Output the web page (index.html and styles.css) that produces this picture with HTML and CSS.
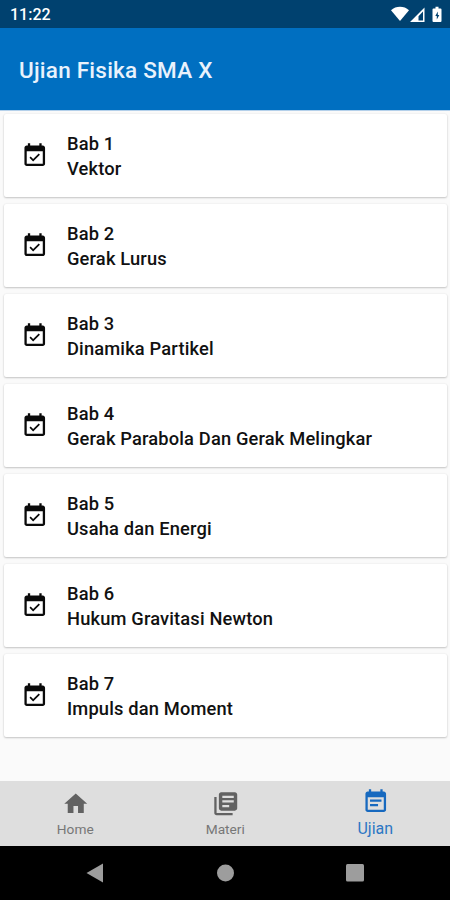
FILE: index.html
```html
<!DOCTYPE html>
<html lang="id">
<head>
<meta charset="utf-8">
<title>Ujian Fisika SMA X</title>
<link rel="stylesheet" href="styles.css">
</head>
<body>
<svg width="0" height="0" class="defs">
  <symbol id="event" viewBox="0 0 24 24"><path d="M16.53 11.06L15.47 10l-4.88 4.88-2.12-2.12-1.06 1.06L10.59 17l5.94-5.94zM19 3h-1V1h-2v2H8V1H6v2H5c-1.11 0-1.99.9-1.99 2L3 19c0 1.1.89 2 2 2h14c1.1 0 2-.9 2-2V5c0-1.1-.9-2-2-2zm0 16H5V8h14v11z"/></symbol>
</svg>
<div class="status">
  <span class="time">11:22</span>
  <svg class="status-icons" width="54" height="18" viewBox="0 0 54 18" fill="#fff">
    <path d="M0 4.2C5-.3 13-.3 18 4.2L9 15z"/>
    <path fill-rule="evenodd" d="M33.500 1.500V16H19zM32 5.500l-4.500 4.800v4.200H32z"/>
    <path fill-rule="evenodd" d="M42.500 2.500h2V.8h3v1.700h2q1 0 1 1V15q0 1-1 1h-7q-1 0-1-1V3.500q0-1 1-1zM46.800 5.500l-2.500 4.500h1.500v3.500l2.500-4.500h-1.500z"/>
  </svg>
</div>
<header class="appbar"><h1>Ujian Fisika SMA X</h1></header>
<main class="list">
  <div class="card"><svg class="icon"><use href="#event"/></svg><div class="text"><div>Bab 1</div><div>Vektor</div></div></div>
  <div class="card"><svg class="icon"><use href="#event"/></svg><div class="text"><div>Bab 2</div><div>Gerak Lurus</div></div></div>
  <div class="card"><svg class="icon"><use href="#event"/></svg><div class="text"><div>Bab 3</div><div>Dinamika Partikel</div></div></div>
  <div class="card"><svg class="icon"><use href="#event"/></svg><div class="text"><div>Bab 4</div><div>Gerak Parabola Dan Gerak Melingkar</div></div></div>
  <div class="card"><svg class="icon"><use href="#event"/></svg><div class="text"><div>Bab 5</div><div>Usaha dan Energi</div></div></div>
  <div class="card"><svg class="icon"><use href="#event"/></svg><div class="text"><div>Bab 6</div><div>Hukum Gravitasi Newton</div></div></div>
  <div class="card"><svg class="icon"><use href="#event"/></svg><div class="text"><div>Bab 7</div><div>Impuls dan Moment</div></div></div>
</main>
<nav class="tabs">
  <div class="tab"><svg class="tab-icon" viewBox="0 0 24 24"><path d="M10 20v-6h4v6h5v-8h3L12 3 2 12h3v8z"/></svg><span>Home</span></div>
  <div class="tab"><svg class="tab-icon" viewBox="0 0 24 24"><path d="M4 6H2v14c0 1.100.9 2 2 2h14v-2H4V6zm16-4H8c-1.100 0-2 .9-2 2v12c0 1.100.9 2 2 2h12c1.100 0 2-.9 2-2V4c0-1.100-.9-2-2-2zm-1 9H9V9h10v2zm-4 4H9v-2h6v2zm4-8H9V5h10v2z"/></svg><span>Materi</span></div>
  <div class="tab active"><svg class="tab-icon" viewBox="0 0 24 24"><path d="M17 10H7v2h10v-2zm2-7h-1V1h-2v2H8V1H6v2H5c-1.110 0-1.990.9-1.990 2L3 19c0 1.100.89 2 2 2h14c1.100 0 2-.9 2-2V5c0-1.100-.9-2-2-2zm0 16H5V8h14v11zm-5-5H7v2h7v-2z"/></svg><span>Ujian</span></div>
</nav>
<footer class="sysnav">
  <svg width="18" height="20" viewBox="0 0 18 20"><path d="M.5 10L17 .5v19z"/></svg>
  <svg width="18" height="20" viewBox="0 0 18 20"><circle cx="9.500" cy="10" r="8.500"/></svg>
  <svg width="18" height="20" viewBox="0 0 18 20"><rect y="1" width="18" height="17.500" rx="1.500"/></svg>
</footer>
</body>
</html>
```
FILE: styles.css
```css
* { box-sizing: border-box; }
body {
  margin: 0;
  height: 900px;
  display: flex;
  flex-direction: column;
  overflow: hidden;
  background: #fafafa;
  font-family: Roboto, sans-serif;
  color: #111;
}
.defs { position: absolute; }
.status {
  height: 28px;
  background: #00416f;
  color: #fff;
  display: flex;
  align-items: center;
  justify-content: space-between;
  padding: 2px 6px 0 10px;
}
.time { font-size: 16px; font-weight: 500; line-height: 26px; }
.status-icons { margin-right: -1px; }
.appbar {
  height: 82px;
  background: #006fc1;
  display: flex;
  align-items: center;
  padding: 2px 19px 0;
}
h1 {
  margin: 0;
  font-size: 22.5px;
  font-weight: 500;
  letter-spacing: .23px;
  line-height: 30px;
  color: #e9f2fc;
}
.list {
  flex: 1;
  padding: 3px 3px 0 4px;
  border-top: 1px solid #b4d0ea;
  display: flex;
  flex-direction: column;
  gap: 7px;
}
.card {
  height: 83px;
  background: #fff;
  border-radius: 2px;
  box-shadow: 0 1px 2px rgba(0, 0, 0, .2), 0 0 2px rgba(0, 0, 0, .08);
  display: flex;
  align-items: center;
  padding-left: 17px;
}
.icon { width: 27.5px; height: 27.5px; fill: #0a0a0a; flex: none; }
.text {
  margin-left: 18.5px;
  margin-top: 0;
  font-size: 18.3px;
  font-weight: 500;
  letter-spacing: .16px;
  line-height: 25px;
  white-space: nowrap;
}
.tabs {
  height: 65px;
  background: #dedede;
  display: flex;
}
.tab {
  flex: 1;
  display: flex;
  flex-direction: column;
  align-items: center;
  padding: 9px 0 0 .5px;
  color: #777;
  font-size: 13.7px;
  line-height: 18px;
}
.tab-icon { width: 27.5px; height: 27.5px; fill: #626262; margin-bottom: 2px; }
.tab.active { padding-top: 7px; color: #2c77c4; font-size: 16px; }
.tab.active .tab-icon { fill: #1769bf; margin-bottom: 4px; }
.sysnav {
  height: 54px;
  background: #000;
  display: flex;
  justify-content: space-between;
  align-items: center;
  padding: 0 86px;
  fill: #9d9d9d;
}
```
